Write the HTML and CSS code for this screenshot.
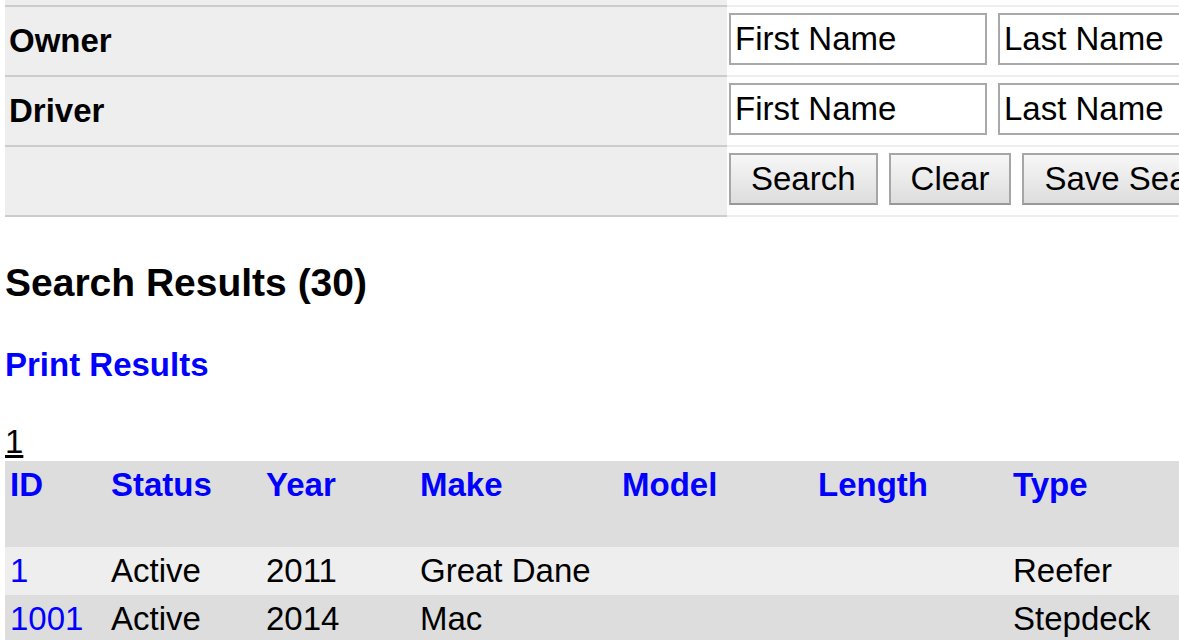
FILE: index.html
```html
<!DOCTYPE html>
<html lang="en">
<head>
<meta charset="UTF-8">
<meta name="viewport" content="width=device-width, initial-scale=1.0">
<title>Trailer Search</title>
<link rel="stylesheet" href="styles.css">
</head>
<body>

<div class="page">
    <div class="search-form">
        <!-- tail of the row above -->
        <div class="field-label stub"></div>
        <div class="field-inputs stub"></div>

        <div class="field-label">Owner</div>
        <div class="field-inputs">
            <input type="text" class="name-box" value="First Name">
            <input type="text" class="name-box" value="Last Name">
        </div>

        <div class="field-label">Driver</div>
        <div class="field-inputs">
            <input type="text" class="name-box" value="First Name">
            <input type="text" class="name-box" value="Last Name">
        </div>

        <div class="field-label last"></div>
        <div class="field-inputs last">
            <button type="button">Search</button>
            <button type="button">Clear</button>
            <button type="button">Save Search</button>
        </div>
    </div>

    <h2 class="results-title">Search Results (30)</h2>

    <a href="#" class="print-link">Print Results</a>

    <div class="pager"><a href="#">1</a></div>

    <table class="results">
        <colgroup>
            <col style="width:101px">
            <col style="width:155px">
            <col style="width:154px">
            <col style="width:202px">
            <col style="width:196px">
            <col style="width:195px">
            <col style="width:200px">
        </colgroup>
        <thead>
            <tr>
                <th><a href="#">ID</a></th>
                <th><a href="#">Status</a></th>
                <th><a href="#">Year</a></th>
                <th><a href="#">Make</a></th>
                <th><a href="#">Model</a></th>
                <th><a href="#">Length</a></th>
                <th><a href="#">Type</a></th>
            </tr>
        </thead>
        <tbody>
            <tr>
                <td><a href="#">1</a></td>
                <td>Active</td>
                <td>2011</td>
                <td>Great Dane</td>
                <td></td>
                <td></td>
                <td>Reefer</td>
            </tr>
            <tr>
                <td><a href="#">1001</a></td>
                <td>Active</td>
                <td>2014</td>
                <td>Mac</td>
                <td></td>
                <td></td>
                <td>Stepdeck</td>
            </tr>
            <tr>
                <td><a href="#">1002</a></td>
                <td>Active</td>
                <td>2015</td>
                <td>Utility</td>
                <td></td>
                <td></td>
                <td>Dry Van</td>
            </tr>
        </tbody>
    </table>
</div>

</body>
</html>
```

FILE: styles.css
```css
html, body {
    overflow: hidden;
}
body {
    margin: 0;
    font-family: "Liberation Sans", Arial, sans-serif;
    font-size: 33px;
    color: #000;
    background: #fff;
}
a {
    color: #0000ff;
}
.page {
    padding-left: 5px;
}

/* search form */
.search-form {
    display: grid;
    grid-template-columns: 722px 1fr;
}
.field-label {
    background-color: #eee;
    border-top: 2px solid #ccc;
    padding-left: 4px;
    font-weight: bold;
    display: flex;
    align-items: center;
}
.field-inputs {
    background-color: #fff;
    border-top: 2px solid #eee;
    padding: 6px 0 10px 2px;
    display: flex;
    gap: 11px;
    white-space: nowrap;
}
.stub {
    height: 5px;
    padding: 0;
    border-top: none;
}
.field-label.last {
    border-bottom: 2px solid #ccc;
}
.field-inputs.last {
    border-bottom: 2px solid #eee;
}
.name-box {
    box-sizing: border-box;
    width: 258px;
    height: 52px;
    flex-shrink: 0;
    margin: 0;
    padding: 0 4px;
    border: 2px solid #a9a9a9;
    font-family: inherit;
    font-size: 33px;
    color: #000;
}
button {
    box-sizing: border-box;
    height: 52px;
    flex-shrink: 0;
    margin: 0;
    padding: 0 20px;
    border: 2px solid #a6a6a6;
    border-bottom-color: #989898;
    border-radius: 0;
    background: linear-gradient(#f7f7f7, #dddddd);
    font-family: inherit;
    font-size: 33px;
    color: #000;
}

/* results */
.results-title {
    margin: 44px 0 0;
    font-size: 39px;
    font-weight: bold;
}
.print-link {
    display: inline-block;
    margin-top: 41px;
    font-weight: bold;
    text-decoration: none;
}
.pager {
    margin-top: 39px;
}
.pager a {
    color: #000;
}
.results {
    table-layout: fixed;
    border-collapse: collapse;
    width: 1203px;
}
.results th, .results td {
    padding: 5px;
    text-align: left;
    vertical-align: top;
    line-height: 38px;
    white-space: nowrap;
}
.results thead tr {
    height: 86px;
    background-color: #ddd;
}
.results th a {
    text-decoration: none;
    font-weight: bold;
}
.results td a {
    text-decoration: none;
}
.results tbody tr:nth-child(odd) {
    background-color: #eee;
}
.results tbody tr:nth-child(even) {
    background-color: #ddd;
}
```
